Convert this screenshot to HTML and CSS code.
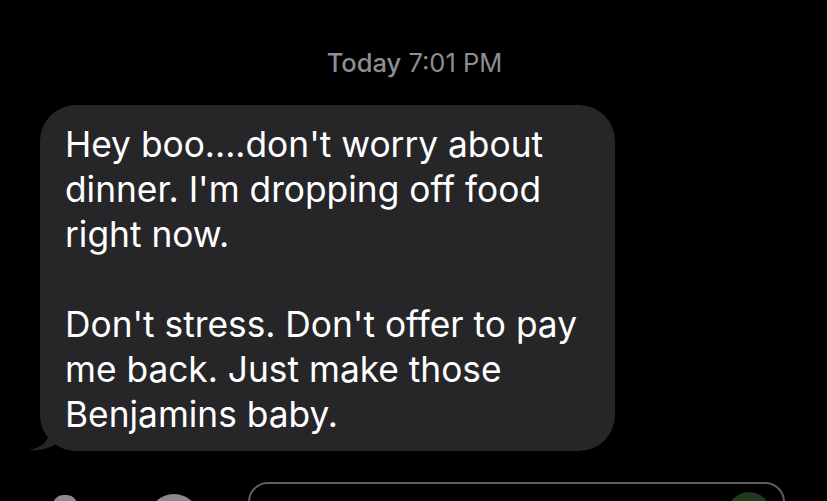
FILE: index.html
```html
<!DOCTYPE html>
<html lang="en">
<head>
  <meta charset="UTF-8">
  <title>Messages</title>
  <link rel="stylesheet" href="styles.css">
</head>
<body>
  <div class="thread">
    <div class="timestamp"><b>Today</b> 7:01 PM</div>

    <div class="bubble-row">
      <div class="bubble">
        <p>Hey boo....don't worry about dinner. I'm dropping off food right now.</p>
        <p>Don't stress. Don't offer to pay me back. Just make those Benjamins baby.</p>
        <svg class="tail" width="30" height="30" viewBox="0 0 30 30">
          <path d="M20 0 L20 10 C20 20 14 26 0 29 C12 30 22 27 28 22 L30 0 Z" fill="#262629"/>
        </svg>
      </div>
    </div>

    <div class="composer">
      <div class="tool camera"></div>
      <div class="tool apps"></div>
      <div class="input">
        <div class="mic"></div>
      </div>
    </div>
  </div>
</body>
</html>
```

FILE: styles.css
```css
body {
  margin: 0;
  background: #000;
  font-family: Inter, "Liberation Sans", sans-serif;
  color: #fff;
  overflow: hidden;
}

.thread {
  height: 501px;
  overflow: hidden;
}

.timestamp {
  padding-top: 47px;
  height: 31px;
  line-height: 31px;
  text-align: center;
  font-size: 25.5px;
  color: #8d8d93;
  padding-left: 2px;
}

.timestamp b {
  font-weight: 500;
}

.bubble-row {
  padding: 27px 0 0 40px;
}

.bubble {
  position: relative;
  width: 525px;
  padding: 17px 25px 14px 25px;
  background: #262629;
  border-radius: 36px;
  font-size: 35.3px;
  line-height: 45px;
}

.bubble p {
  margin: 0;
}

.bubble p + p {
  margin-top: 45px;
}

.tail {
  position: absolute;
  left: -11px;
  bottom: 0;
}

.composer {
  display: flex;
  align-items: flex-start;
  margin-top: 31px;
  padding-left: 53px;
}

.tool {
  background: #8a8a8a;
  flex-shrink: 0;
}

.camera {
  width: 24px;
  height: 20px;
  margin-top: 13px;
  border-radius: 10px 10px 0 0;
}

.apps {
  width: 52px;
  height: 30px;
  margin: 12px 0 0 71px;
  border-radius: 26px 26px 0 0;
}

.input {
  position: relative;
  width: 537px;
  height: 40px;
  margin-left: 48px;
  border: 2px solid #5e5e60;
  border-radius: 36px;
  box-sizing: border-box;
}

.mic {
  position: absolute;
  right: 12px;
  top: 8px;
  width: 44px;
  height: 44px;
  border-radius: 50%;
  background: #1f3a1f;
}
```
